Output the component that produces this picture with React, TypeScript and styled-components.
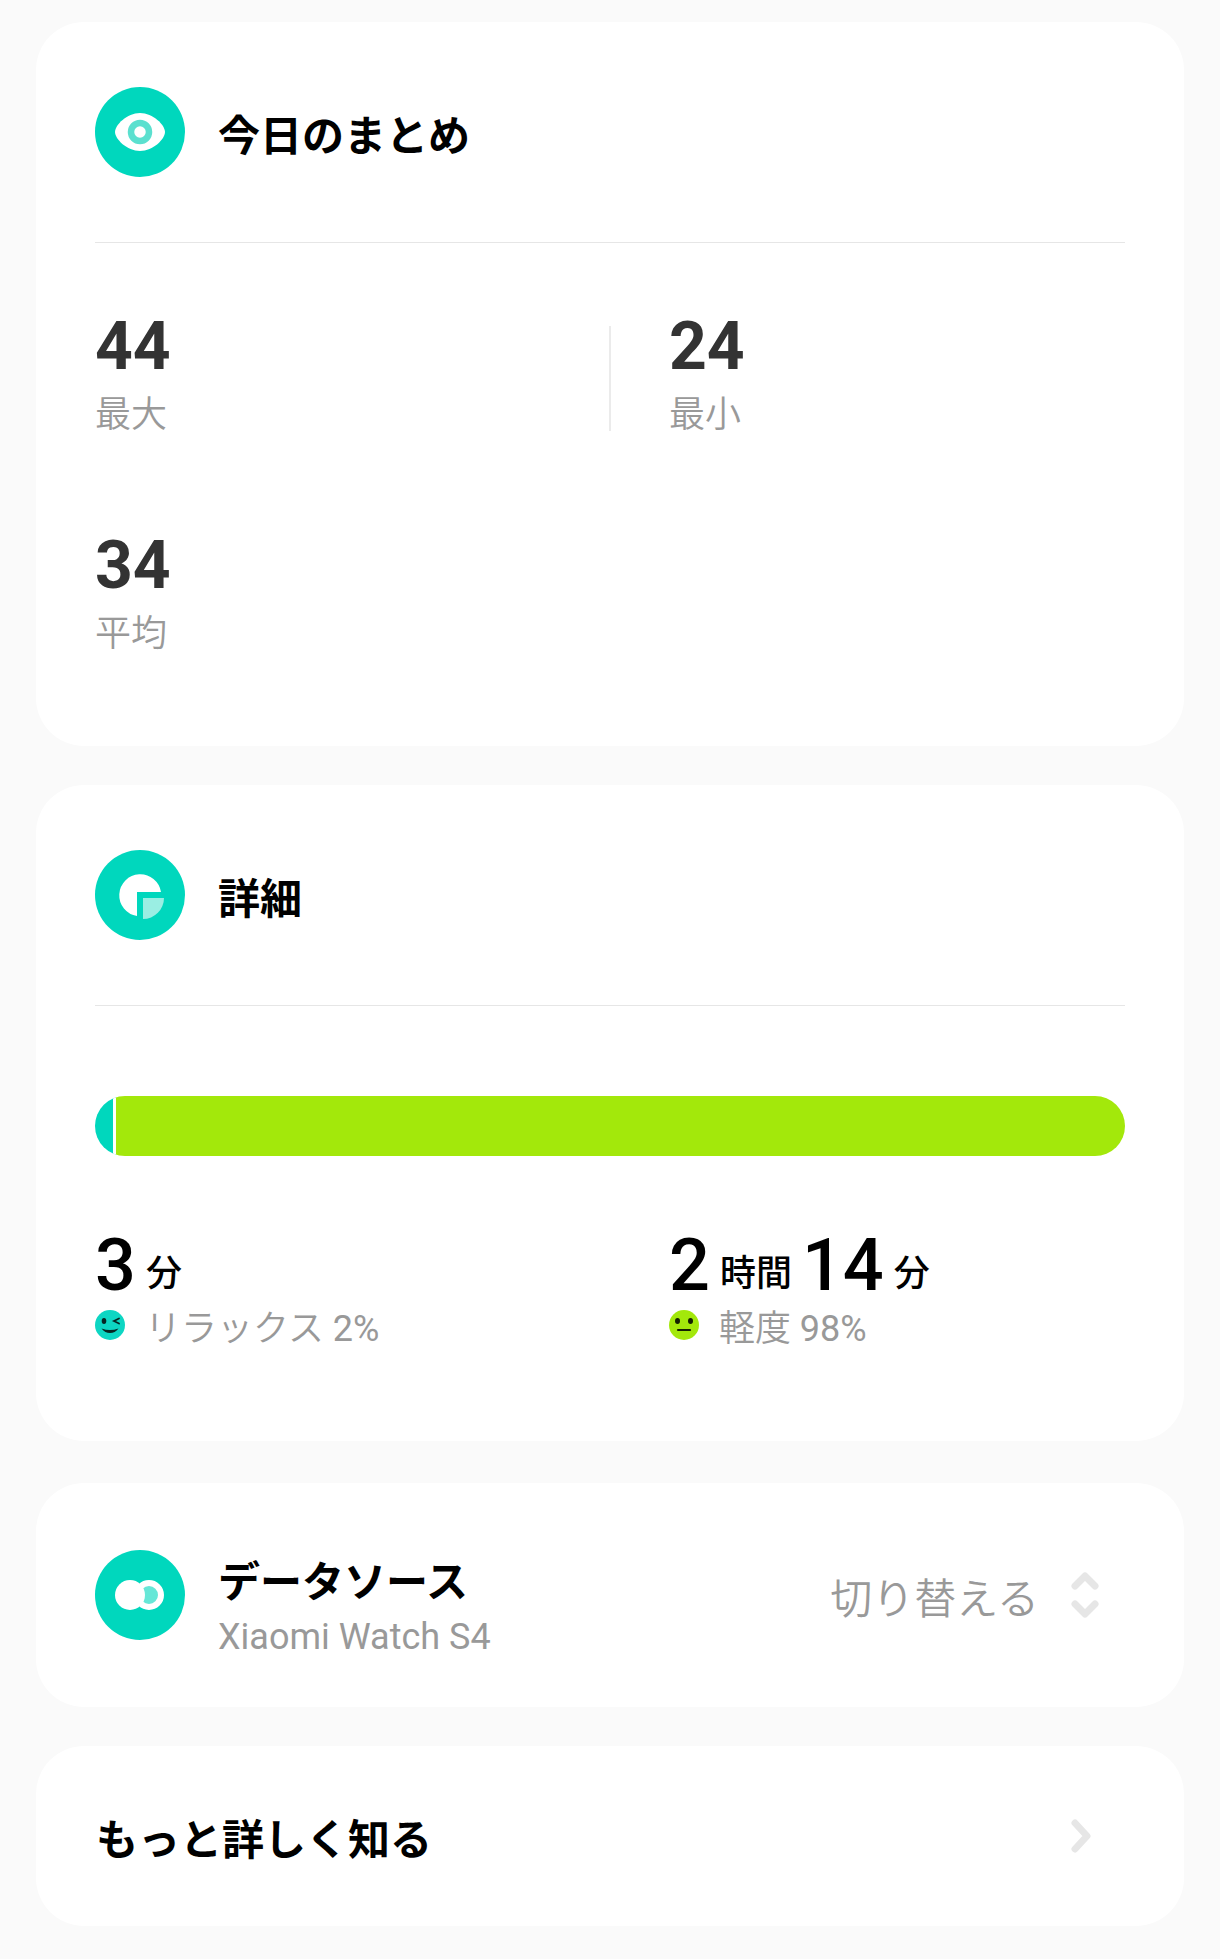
import React from "react";
import styled, { createGlobalStyle } from "styled-components";

const GlobalStyle = createGlobalStyle`
  *, *::before, *::after { box-sizing: border-box; }
  body {
    margin: 0;
    background: #fafafa;
    font-family: Roboto, "Noto Sans CJK JP", sans-serif;
    color: #000;
  }
  h2, dl, dd { margin: 0; }
`;

const Page = styled.main`
  display: flex;
  flex-direction: column;
  gap: 42px;
  padding: 22px 36px 33px;
`;

const CardGroup = styled.div`
  display: flex;
  flex-direction: column;
  gap: 39px;
`;

const Card = styled.section`
  padding: 0 59px;
  border-radius: 48px;
  background: #fff;
`;

const CardHeader = styled.header`
  display: flex;
  align-items: center;
  gap: 33px;
  padding: 65px 0;
  border-bottom: 1px solid #e6e6e6;
`;

const Badge = styled.svg`
  display: block;
  flex: none;
  width: 90px;
  height: 90px;
`;

const Title = styled.h2`
  padding-top: 2px;
  font: 700 42px/56px "Noto Sans CJK JP", sans-serif;
`;

const StatGrid = styled.dl`
  display: grid;
  grid-template-columns: 1fr 1fr;
  row-gap: 83px;
  padding: 64px 0 84px;
`;

const StatCell = styled.div<{ $divided?: boolean }>`
  display: flex;
  align-items: flex-end;
  gap: 58px;

  &::before {
    content: "";
    display: ${(p) => (p.$divided ? "block" : "none")};
    width: 2px;
    height: 105px;
    margin: 0 0 12px -1px;
    background: #ebebeb;
  }
`;

const Stat = styled.div`
  display: flex;
  flex-direction: column-reverse;
`;

const StatLabel = styled.dt`
  font-size: 36px;
  font-weight: 350;
  line-height: 56px;
  color: #999;
`;

const StatValue = styled.dd`
  font-size: 66px;
  font-weight: 700;
  line-height: 80px;
  color: #333;
`;

const Bar = styled.div`
  display: flex;
  height: 60px;
  margin-top: 90px;
  border-radius: 30px;
  overflow: hidden;
`;

const BarPart = styled.div<{ $color: string }>`
  background: ${(p) => p.$color};

  &:not(:last-child) { border-right: 3px solid #fff; }
`;

const LevelGrid = styled.dl`
  display: grid;
  grid-template-columns: 1fr 1fr;
  padding: 70px 0 89px;
`;

const Level = styled.div<{ $inset?: boolean }>`
  display: flex;
  flex-direction: column-reverse;
  padding-left: ${(p) => (p.$inset ? 59 : 0)}px;
`;

const Duration = styled.dd`
  display: flex;
  align-items: flex-end;
  gap: 10px;
  font-weight: 500;
`;

const Amount = styled.span`
  font-size: 72px;
  line-height: 80px;
`;

const Unit = styled.span`
  font-size: 36px;
  line-height: 64px;
`;

const LevelLabel = styled.dt`
  display: flex;
  align-items: center;
  gap: 20px;
  font-size: 36px;
  font-weight: 350;
  line-height: 46px;
  color: #999;
`;

const Percent = styled.span`
  font-weight: 400;
`;

const Face = styled.svg`
  flex: none;
  width: 30px;
  height: 30px;
  margin-bottom: 8px;
`;

const SourceCard = styled(Card)`
  display: flex;
  align-items: center;
  gap: 33px;
  min-height: 224px;
`;

const SourceText = styled.div`
  flex: 1;
  padding-top: 26px;
`;

const SourceName = styled.p`
  margin: 0;
  font-size: 36px;
  line-height: 60px;
  color: #999;
`;

const SwitchButton = styled.button`
  display: flex;
  align-items: center;
  gap: 30px;
  margin-right: 24px;
  padding: 0;
  border: 0;
  background: none;
  font: 350 42px/56px "Noto Sans CJK JP", sans-serif;
  color: #999;
  cursor: pointer;
`;

const SwitchLabel = styled.span`
  padding-top: 2px;
`;

const MoreLink = styled.a`
  display: flex;
  align-items: center;
  justify-content: space-between;
  min-height: 180px;
  padding: 0 93px 0 60px;
  border-radius: 48px;
  background: #fff;
  color: inherit;
  text-decoration: none;
`;

const Chevrons = styled.svg`
  display: block;
  fill: none;
  stroke: #e6e6e6;
  stroke-width: 7;
  stroke-linecap: round;
  stroke-linejoin: round;
`;

const levels = [
  { name: "リラックス", percent: 2, color: "#00d7bd", parts: [["3", "分"]] },
  { name: "軽度", percent: 98, color: "#a3e80b", parts: [["2", "時間"], ["14", "分"]] },
];

const stats = [
  { label: "最大", value: 44 },
  { label: "最小", value: 24 },
  { label: "平均", value: 34 },
];

const EyeBadge = () => (
  <Badge viewBox="0 0 90 90" aria-hidden="true">
    <circle cx="45" cy="45" r="45" fill="#00d7bd" />
    <path d="M20 45C20 38 32 26 45 26S70 38 70 45S58 64 45 64S20 52 20 45Z" fill="#fff" />
    <circle cx="45" cy="45" r="9" fill="none" stroke="#5be0cf" strokeWidth="6.5" />
  </Badge>
);

const PieBadge = () => (
  <Badge viewBox="0 0 90 90" aria-hidden="true">
    <circle cx="45" cy="45" r="45" fill="#00d7bd" />
    <path d="M42 66A21 21 0 1 1 66 42H42Z" fill="#fff" />
    <path d="M48 48H69A21 21 0 0 1 48 69Z" fill="#9aeee3" />
  </Badge>
);

const LinkBadge = () => (
  <Badge viewBox="0 0 90 90" aria-hidden="true">
    <circle cx="45" cy="45" r="45" fill="#00d7bd" />
    <circle cx="54" cy="45" r="12" fill="#66e7d7" stroke="#fff" strokeWidth="6" />
    <circle cx="35" cy="45" r="15" fill="#fff" />
  </Badge>
);

const WinkFace = () => (
  <Face viewBox="0 0 30 30" aria-hidden="true">
    <circle cx="15" cy="15" r="15" fill="#0dd6c3" />
    <ellipse cx="9" cy="11" rx="2.3" ry="3" fill="#062522" />
    <path d="M24 8.5L19 11L24 13.5" fill="none" stroke="#062522" strokeWidth="1.8" strokeLinecap="round" />
    <path d="M6.5 18.5Q15 21.5 23.5 18.5Q20 23 15 23T6.5 18.5Z" fill="#062522" />
  </Face>
);

const NeutralFace = () => (
  <Face viewBox="0 0 30 30" aria-hidden="true">
    <circle cx="15" cy="15" r="15" fill="#a3e80b" />
    <ellipse cx="8.5" cy="11" rx="2.5" ry="3" fill="#142000" />
    <ellipse cx="21.5" cy="11" rx="2.5" ry="3" fill="#142000" />
    <path d="M9 20H21" stroke="#142000" strokeWidth="2.2" strokeLinecap="round" />
  </Face>
);

export default function App() {
  return (
    <>
      <GlobalStyle />
      <Page lang="ja">
        <CardGroup>
          <Card>
            <CardHeader>
              <EyeBadge />
              <Title>今日のまとめ</Title>
            </CardHeader>
            <StatGrid>
              {stats.map((s, i) => (
                <StatCell key={s.label} $divided={i % 2 === 1}>
                  <Stat>
                    <StatLabel>{s.label}</StatLabel>
                    <StatValue>{s.value}</StatValue>
                  </Stat>
                </StatCell>
              ))}
            </StatGrid>
          </Card>
          <Card>
            <CardHeader>
              <PieBadge />
              <Title>詳細</Title>
            </CardHeader>
            <Bar>
              {levels.map((l) => (
                <BarPart key={l.name} $color={l.color} style={{ width: `${l.percent}%` }} />
              ))}
            </Bar>
            <LevelGrid>
              {levels.map((l, i) => (
                <Level key={l.name} $inset={i % 2 === 1}>
                  <LevelLabel>
                    {i === 0 ? <WinkFace /> : <NeutralFace />}
                    <span>
                      {l.name} <Percent>{l.percent}%</Percent>
                    </span>
                  </LevelLabel>
                  <Duration>
                    {l.parts.map(([amount, unit]) => (
                      <React.Fragment key={unit}>
                        <Amount>{amount}</Amount>
                        <Unit>{unit}</Unit>
                      </React.Fragment>
                    ))}
                  </Duration>
                </Level>
              ))}
            </LevelGrid>
          </Card>
        </CardGroup>
        <CardGroup>
          <SourceCard>
            <LinkBadge />
            <SourceText>
              <Title>データソース</Title>
              <SourceName>Xiaomi Watch S4</SourceName>
            </SourceText>
            <SwitchButton type="button">
              <SwitchLabel>切り替える</SwitchLabel>
              <Chevrons width="32" height="52" viewBox="0 0 32 52" aria-hidden="true">
                <path d="M6 17L16 7L26 17" />
                <path d="M6 35L16 45L26 35" />
              </Chevrons>
            </SwitchButton>
          </SourceCard>
          <MoreLink href="#more">
            <Title>もっと詳しく知る</Title>
            <Chevrons width="20" height="34" viewBox="0 0 20 34" aria-hidden="true">
              <path d="M4 4L16 17L4 30" />
            </Chevrons>
          </MoreLink>
        </CardGroup>
      </Page>
    </>
  );
}
